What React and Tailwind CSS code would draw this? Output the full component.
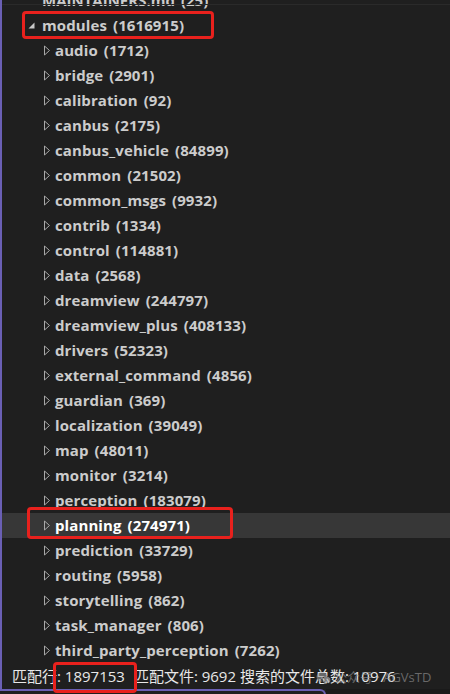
import React from "react";

const children = [
  ["audio", "1712"],
  ["bridge", "2901"],
  ["calibration", "92"],
  ["canbus", "2175"],
  ["canbus_vehicle", "84899"],
  ["common", "21502"],
  ["common_msgs", "9932"],
  ["contrib", "1334"],
  ["control", "114881"],
  ["data", "2568"],
  ["dreamview", "244797"],
  ["dreamview_plus", "408133"],
  ["drivers", "52323"],
  ["external_command", "4856"],
  ["guardian", "369"],
  ["localization", "39049"],
  ["map", "48011"],
  ["monitor", "3214"],
  ["perception", "183079"],
  ["planning", "274971"],
  ["prediction", "33729"],
  ["routing", "5958"],
  ["storytelling", "862"],
  ["task_manager", "806"],
  ["third_party_perception", "7262"],
];

const font = { fontFamily: '"Open Sans", "Noto Sans CJK SC", sans-serif' };

function Closed() {
  return (
    <svg width="7" height="11" viewBox="0 0 7 11" className="block">
      <polygon points="0.5,1 5.5,5.5 0.5,10" fill="none" stroke="#a9a9a9" strokeWidth="1" />
    </svg>
  );
}

function Open() {
  return (
    <svg width="7" height="7" viewBox="0 0 7 7" className="block">
      <polygon points="6.5,0.5 6.5,6.5 0.5,6.5" fill="#c8c8c8" />
    </svg>
  );
}

function Row({ name, count, level, selected }) {
  return (
    <div
      className={
        "flex items-center h-[25px] whitespace-nowrap font-bold text-[15px] tracking-[0.1px] " +
        (selected ? "bg-[#373737] text-[#ffffff]" : "text-[#cccccc]")
      }
    >
      <div className={level === 0 ? "w-[42px] pl-[28px] flex items-center" : "w-[55px] pl-[44px] flex items-center"}>
        {level === 0 ? <Open /> : <Closed />}
      </div>
      <span>{name}</span>
      <span className="ml-[6px]">({count})</span>
    </div>
  );
}

export default function App() {
  return (
    <div className="relative w-[450px] h-[694px] overflow-hidden bg-[#1f1f1f]" style={font}>
      <div className="absolute left-0 top-0 bottom-[5px] w-[2px] bg-[#6a5fb4]" />
      <div className="absolute left-[2px] right-0 top-[4px] h-px bg-[#2a2a2a]" />
      <div className="mt-[-12px]">
        <div className="flex items-center h-[25px] whitespace-nowrap font-bold text-[15px] text-[#cccccc]">
          <div className="w-[42px] pl-[28px]" />
          <span>MAINTAINERS.md</span>
          <span className="ml-[6px]">(25)</span>
        </div>
        <Row name="modules" count="1616915" level={0} />
        {children.map(([n, c]) => (
          <Row key={n} name={n} count={c} level={1} selected={n === "planning"} />
        ))}
        <div className="flex items-center h-[26px] pl-[12px] text-[15px] text-[#e8e8e8] whitespace-nowrap">
          <span>匹配行: 1897153</span>
          <span className="ml-[9px]">匹配文件: 9692 搜索的文件总数: 10976</span>
        </div>
        <div className="flex">
          <div className="w-[326px] h-[10px] border-t-2 border-r-2 border-[#6a5fb4] rounded-tr-[6px]" />
          <div className="flex-1 h-[10px] bg-[#1a1a1a]" />
        </div>
      </div>

      {/* watermark */}
      <div className="absolute left-[316px] top-[668px] flex items-center gap-[2px] text-[13px] text-[#9a9a9a] opacity-60 whitespace-nowrap pointer-events-none">
        <svg width="16" height="14" viewBox="0 0 16 14">
          <ellipse cx="6" cy="6" rx="5.5" ry="4.8" fill="#9a9a9a" />
          <ellipse cx="10.5" cy="9" rx="4.5" ry="3.8" fill="#bbbbbb" stroke="#1f1f1f" strokeWidth="1" />
        </svg>
        <span>公众号 · AGVsTD</span>
      </div>

      {/* red annotation boxes */}
      <div className="absolute left-[22px] top-[11px] w-[192px] h-[28px] border-[3px] border-[#e8211d] rounded-[4px]" />
      <div className="absolute left-[27px] top-[507px] w-[206px] h-[32px] border-[3px] border-[#e8211d] rounded-[4px]" />
      <div className="absolute left-[53px] top-[662px] w-[84px] h-[31px] border-[3px] border-[#e8211d] rounded-[4px]" />
    </div>
  );
}
